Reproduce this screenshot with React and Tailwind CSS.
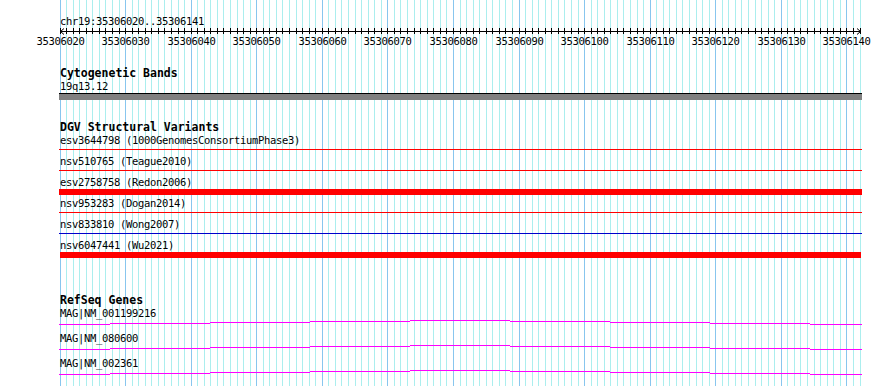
import React from 'react';

const GRID_LEFT = 60;
const GRID_W = 800;
const BASES = 122;
const START = 35306020;

// x position of base i on the track canvas (crisp 1px lines)
const gx = (i) => Math.floor(GRID_LEFT + (i * GRID_W) / BASES) + 0.5;

const variants = [
  { label: 'esv3644798 (1000GenomesConsortiumPhase3)', kind: 'thin', color: 'bg-[#ff0000]' },
  { label: 'nsv510765 (Teague2010)', kind: 'thin', color: 'bg-[#ff0000]' },
  { label: 'esv2758758 (Redon2006)', kind: 'thick', wide: true },
  { label: 'nsv953283 (Dogan2014)', kind: 'thin', color: 'bg-[#ff0000]' },
  { label: 'nsv833810 (Wong2007)', kind: 'thin', color: 'bg-[#0000cc]' },
  { label: 'nsv6047441 (Wu2021)', kind: 'thick', wide: false },
];

const genes = ['MAG|NM_001199216', 'MAG|NM_080600', 'MAG|NM_002361'];

// exon-ish step segments of the gene models
const stepX = [59, 110, 210, 310, 410, 510, 610, 710, 810, 862];
const stepY = [4, 3, 2, 1, 0, 1, 2, 3, 4];

const Grid = () => (
  <svg className="absolute inset-0" width="890" height="386" shapeRendering="crispEdges">
    {Array.from({ length: BASES + 1 }, (_, i) => (
      <line
        key={i}
        x1={gx(i)}
        x2={gx(i)}
        y1={0}
        y2={386}
        stroke={i % 10 === 0 ? '#88c6ee' : '#abeeee'}
        strokeWidth="1"
      />
    ))}
  </svg>
);

const Ruler = () => (
  <svg width="890" height="20" className="block">
    <g shapeRendering="crispEdges" stroke="#000" strokeWidth="1">
      <line x1={60} x2={861} y1={3.5} y2={3.5} />
      {Array.from({ length: BASES + 1 }, (_, i) => (
        <line key={i} x1={gx(i)} x2={gx(i)} y1={0} y2={6} />
      ))}
    </g>
    <polyline points="64,0.5 60.5,3.5 64,6.5" fill="none" stroke="#000" strokeWidth="1" />
    <polyline points="857,0.5 860.5,3.5 857,6.5" fill="none" stroke="#000" strokeWidth="1" />
    {Array.from({ length: 13 }, (_, k) => (
      <text
        key={k}
        x={gx(k * 10)}
        y={16.5}
        textAnchor="middle"
        fontSize="10.5"
        letterSpacing="-0.32"
        fontFamily="'DejaVu Sans Mono', monospace"
        fill="#000"
      >
        {START + k * 10}
      </text>
    ))}
  </svg>
);

const GeneModel = () => (
  <svg width="890" height="12" className="block" shapeRendering="crispEdges">
    {stepY.map((y, i) => (
      <line
        key={i}
        x1={stepX[i]}
        x2={stepX[i + 1]}
        y1={y + 0.5}
        y2={y + 0.5}
        stroke="#ff00ff"
        strokeWidth="1"
      />
    ))}
  </svg>
);

const Title = ({ children, className = '' }) => (
  <div className={`pl-[60px] text-[11.5px] leading-[13px] font-bold text-black ${className}`}>{children}</div>
);

const Label = ({ children }) => (
  <div className="pl-[60px] text-[10.5px] leading-[13px] tracking-[-0.32px] text-black whitespace-pre">
    {children}
  </div>
);

export default function App() {
  return (
    <div className="relative w-[890px] h-[386px] overflow-hidden bg-white font-['DejaVu_Sans_Mono',monospace]">
      <Grid />

      <div className="relative flex flex-col">
        <div className="pt-[15px]">
          <Label>chr19:35306020..35306141</Label>
        </div>
        <Ruler />

        <Title className="mt-[19px]">Cytogenetic Bands</Title>
        <Label>19q13.12</Label>
        <div className="ml-[59px] w-[803px] h-[7px] border-t border-black bg-[#808080]" />

        <Title className="mt-[21px]">DGV Structural Variants</Title>
        {variants.map((v) => (
          <div key={v.label} className="flex flex-col">
            <Label>{v.label}</Label>
            {v.kind === 'thin' ? (
              <div className={`mt-[2px] mb-[5px] ml-[59px] w-[803px] h-px ${v.color}`} />
            ) : (
              <div
                className={`mb-[2px] h-[6px] bg-[#ff0000] ${v.wide ? 'ml-[59px] w-[803px]' : 'ml-[60px] w-[801px]'}`}
              />
            )}
          </div>
        ))}

        <Title className="mt-[34px]">RefSeq Genes</Title>
        {genes.map((g) => (
          <div key={g} className="flex flex-col">
            <Label>{g}</Label>
            <GeneModel />
          </div>
        ))}
      </div>
    </div>
  );
}
